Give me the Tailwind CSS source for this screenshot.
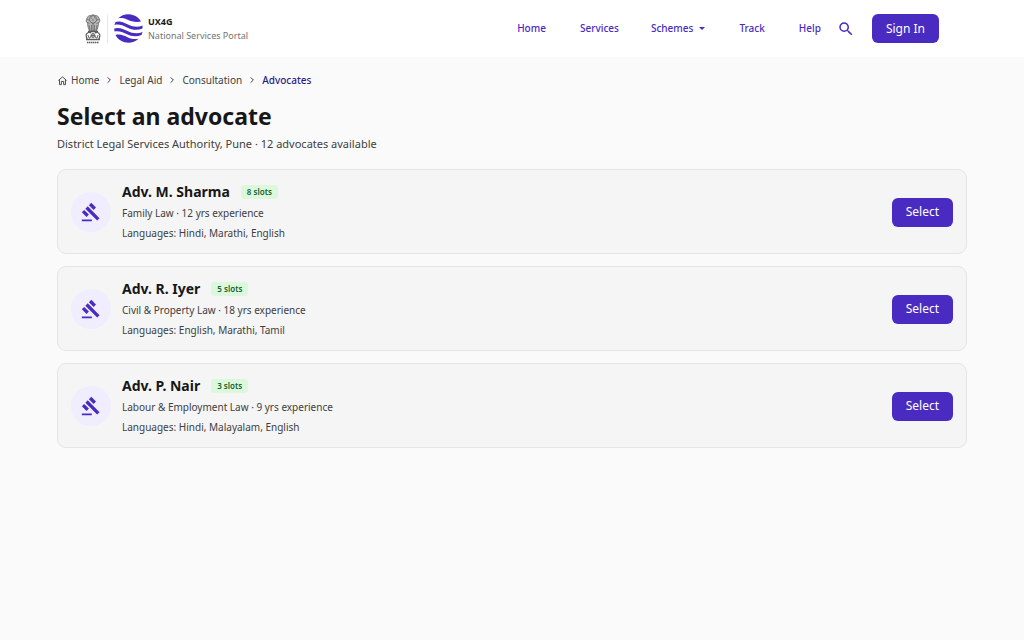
<!DOCTYPE html>
<html lang="en">
<head>
<meta charset="utf-8">
<meta name="viewport" content="width=device-width, initial-scale=1">
<title>Select an advocate</title>
<script src="https://cdn.jsdelivr.net/npm/@tailwindcss/browser@4"></script>
</head>
<body class="min-h-screen bg-[#fafafa] font-['Noto_Sans',sans-serif] text-[10px] leading-4 text-[#404040]">
<svg class="hidden" aria-hidden="true">
  <symbol id="gavel" viewBox="0 0 24 24"><path d="M1 21h12v2H1zM5.24 8.07l2.83-2.83 14.14 14.14-2.83 2.83zM12.32 1l5.66 5.66-2.83 2.83-5.66-5.66zM3.83 9.48l5.66 5.66-2.83 2.83L1 12.31z"/></symbol>
  <symbol id="chevron" viewBox="0 0 24 24"><path d="M8 4l8 8-8 8" fill="none" stroke="currentColor" stroke-width="3"/></symbol>
</svg>
<header class="bg-white">
  <div class="mx-auto flex h-[57px] max-w-[910px] items-center justify-between px-7">
    <a href="#" class="flex items-center">
      <svg class="h-8 w-4" viewBox="0 0 16 32" fill="none" stroke="#5c5c5c" aria-label="State Emblem of India">
        <path d="M2 5Q3 2 6 2.500Q8 .8 10 2.500Q13 2 14 5L15 8 13.500 10 13 14 11.500 18H4.500L3 14 2.500 10 1 8Z" fill="#b8b8b8" stroke-width=".7"/>
        <path d="M5 4Q8 1 11 4L11.500 8 8 11 4.500 8ZM6 5h1M9 5h1M7 7h2M5.500 9Q8 11.500 10.500 9M2 6l2 1M14 6l-2 1M2.500 9l2 2M13.500 9l-2 2M4 12l1 5M12 12l-1 5M6.500 12v6M9.500 12v6M8 11v7" stroke-width=".7"/>
        <path d="M3 18.500h10M1 22Q3 18 6 20M10 20Q13 18 15 22M1 26.500h14M1 22l1 4M15 22l-1 4" stroke-width="1.300"/>
        <circle cx="8" cy="22.500" r="2" stroke-width=".9"/><path d="M8 20.500v4M6 22.500h4M3 22l1 3h1l1-2M13 22l-1 3h-1l-1-2" stroke-width=".9"/>
        <path d="M2 29.500h12" stroke-width="1.300" stroke-dasharray="1.500 .5"/>
      </svg>
      <span class="mr-1.5 ml-1.5 h-7 w-px bg-[#e5e5e5]"></span>
      <svg class="size-[29px]" viewBox="0 0 29 29" fill="#4a2bc2" aria-hidden="true">
        <path d="M4 4.500C8 .5 14-.8 19.500 1.200C23 2.400 25.500 4.700 27 7.500C22 8.700 17 7.300 13 5.500C9.500 4 6.500 3.700 4 4.500Z"/>
        <path d="M1.500 8C6 6.500 10 8.500 14 10.500C19 13 24 13.500 28.500 11.500V14.500C23.500 16.700 18 16 13 13.500C8.500 11.200 4.500 9.700.5 11Z"/>
        <path d="M.2 14.500C5 13 9.500 15 13.500 17C18.500 19.400 23.500 20 28.500 18L27.500 21C22.500 23 17.500 22.500 12.500 20C8.500 18 4.500 16.400.5 17.500Z"/>
        <path d="M1.500 21C6 19.700 10 21.500 14 23.400C17.500 25 21 25.500 24.500 24.700C20 29 13 30 7.500 27C4.700 25.500 2.700 23.500 1.500 21Z"/>
      </svg>
      <span class="ml-[5px] flex flex-col text-[9px] leading-[14px] text-[#737373]"><strong class="font-bold text-[#171717]">UX4G</strong>National Services Portal</span>
    </a>
    <div class="flex items-center font-medium text-[#4a2bc2]">
      <nav class="flex items-center gap-[34px] leading-[17px]" aria-label="Main">
        <a href="#">Home</a>
        <a href="#">Services</a>
        <a href="#" class="-ml-0.5 flex items-center gap-1.5">Schemes
          <svg class="h-[3px] w-1.5" viewBox="0 0 6 3" fill="currentColor" aria-hidden="true"><path d="M0 0h6L3 3z"/></svg></a>
        <a href="#">Track</a>
        <a href="#">Help</a>
      </nav>
      <button type="button" aria-label="Search" class="mr-[17px] ml-4"><svg class="size-[18px]" viewBox="0 0 24 24" fill="currentColor"><path d="M15.500 14h-.79l-.28-.27A6.470 6.470 0 0 0 16 9.500 6.500 6.500 0 1 0 9.500 16c1.610 0 3.090-.59 4.230-1.570l.27.28v.79l5 4.990L20.490 19l-4.990-5zm-6 0C7.010 14 5 11.990 5 9.500S7.010 5 9.500 5 14 7.010 14 9.500 11.990 14 9.500 14z"/></svg></button>
      <button type="button" class="h-[29px] rounded-[6px] bg-[#4a2bc2] px-3.5 text-xs font-normal text-white">Sign In</button>
    </div>
  </div>
</header>
<main class="mx-auto max-w-[910px] pt-[15px]">
  <nav class="flex items-center gap-1.5" aria-label="Breadcrumb">
    <a href="#" class="flex items-center gap-[3px]"><svg class="size-[11px]" viewBox="0 0 24 24" fill="none" stroke="currentColor" stroke-width="2" aria-hidden="true"><path d="M3 12L12 4l9 8M5.500 10v11h4v-7h5v7h4V10"/></svg>Home</a>
    <svg class="size-2" aria-hidden="true"><use href="#chevron"/></svg>
    <a href="#">Legal Aid</a>
    <svg class="size-2" aria-hidden="true"><use href="#chevron"/></svg>
    <a href="#">Consultation</a>
    <svg class="size-2" aria-hidden="true"><use href="#chevron"/></svg>
    <a href="#" aria-current="page" class="font-medium text-[#2f1c85]">Advocates</a>
  </nav>
  <h1 class="mt-[11px] text-[23px] leading-[34px] font-bold text-[#171717]">Select an advocate</h1>
  <p class="mt-[3px] text-[11px] leading-4">District Legal Services Authority, Pune · 12 advocates available</p>
  <ul class="mt-[17px] flex flex-col gap-3">
    <li class="flex items-center gap-[11px] rounded-[9px] border border-[#e5e5e5] bg-[#f5f5f5] px-[13px] pt-3 pb-[11px]">
      <span class="grid size-10 place-items-center rounded-full bg-[#f0edff] text-[#4a2bc2]"><svg class="size-5" fill="currentColor" aria-hidden="true"><use href="#gavel"/></svg></span>
      <div class="flex-1">
        <div class="flex items-center gap-[11px]"><h2 class="text-[14px] leading-5 font-bold text-[#171717]">Adv. M. Sharma</h2><span class="rounded-[3px] bg-[#dcf8dc] px-1.5 text-[8px] leading-[14px] font-semibold text-[#14602f]">8 slots</span></div>
        <p class="mt-0.5 leading-[18px]">Family Law · 12 yrs experience</p>
        <p class="mt-0.5 leading-[18px]">Languages: Hindi, Marathi, English</p>
      </div>
      <button type="button" class="h-[29px] rounded-[6px] bg-[#4a2bc2] px-3.5 text-xs text-white">Select</button>
    </li>
    <li class="flex items-center gap-[11px] rounded-[9px] border border-[#e5e5e5] bg-[#f5f5f5] px-[13px] pt-3 pb-[11px]">
      <span class="grid size-10 place-items-center rounded-full bg-[#f0edff] text-[#4a2bc2]"><svg class="size-5" fill="currentColor" aria-hidden="true"><use href="#gavel"/></svg></span>
      <div class="flex-1">
        <div class="flex items-center gap-[11px]"><h2 class="text-[14px] leading-5 font-bold text-[#171717]">Adv. R. Iyer</h2><span class="rounded-[3px] bg-[#dcf8dc] px-1.5 text-[8px] leading-[14px] font-semibold text-[#14602f]">5 slots</span></div>
        <p class="mt-0.5 leading-[18px]">Civil &amp; Property Law · 18 yrs experience</p>
        <p class="mt-0.5 leading-[18px]">Languages: English, Marathi, Tamil</p>
      </div>
      <button type="button" class="h-[29px] rounded-[6px] bg-[#4a2bc2] px-3.5 text-xs text-white">Select</button>
    </li>
    <li class="flex items-center gap-[11px] rounded-[9px] border border-[#e5e5e5] bg-[#f5f5f5] px-[13px] pt-3 pb-[11px]">
      <span class="grid size-10 place-items-center rounded-full bg-[#f0edff] text-[#4a2bc2]"><svg class="size-5" fill="currentColor" aria-hidden="true"><use href="#gavel"/></svg></span>
      <div class="flex-1">
        <div class="flex items-center gap-[11px]"><h2 class="text-[14px] leading-5 font-bold text-[#171717]">Adv. P. Nair</h2><span class="rounded-[3px] bg-[#dcf8dc] px-1.5 text-[8px] leading-[14px] font-semibold text-[#14602f]">3 slots</span></div>
        <p class="mt-0.5 leading-[18px]">Labour &amp; Employment Law · 9 yrs experience</p>
        <p class="mt-0.5 leading-[18px]">Languages: Hindi, Malayalam, English</p>
      </div>
      <button type="button" class="h-[29px] rounded-[6px] bg-[#4a2bc2] px-3.5 text-xs text-white">Select</button>
    </li>
  </ul>
</main>
</body>
</html>
